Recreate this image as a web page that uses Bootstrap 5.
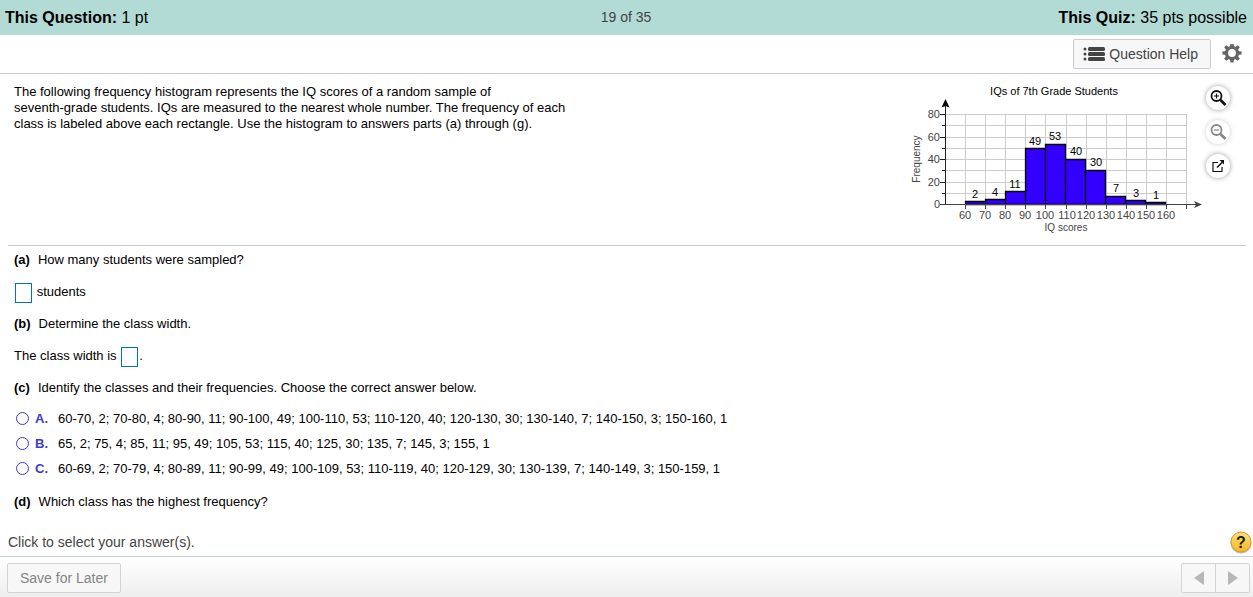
<!DOCTYPE html>
<html lang="en">
<head>
<meta charset="utf-8">
<meta name="viewport" content="width=device-width, initial-scale=1">
<title>Quiz</title>
<link rel="stylesheet" href="https://cdn.jsdelivr.net/npm/bootstrap@5.3.0/dist/css/bootstrap.min.css">
<style>
body { font-family: "Liberation Sans", Arial, sans-serif; font-size: 13px; line-height: 16px; color: #000; }
.quiz-head { background: #b2dbd5; font-size: 16px; line-height: 35px; padding: 0 6px 0 5px; }
.quiz-head .progress-note { font-size: 14px; color: #444; }
.tools { height: 39px; border-bottom: 1px solid #c8cad6; padding: 0 11px 0 8px; gap: 11px; }
.btn-quiz { --bs-btn-font-size: 14px; --bs-btn-line-height: 20px; --bs-btn-padding-x: 12px; --bs-btn-padding-y: 4px;
  --bs-btn-border-radius: 2px; --bs-btn-bg: #f7f7f7; --bs-btn-border-color: #ccc; --bs-btn-color: #444;
  --bs-btn-disabled-bg: #f7f7f7; --bs-btn-disabled-border-color: #d4d4d4; --bs-btn-disabled-color: #858585; --bs-btn-disabled-opacity: 1; }
.btn-help { padding-left: 9px; }
.plain { border: 0; background: none; padding: 0; line-height: 0; }
.prompt { min-height: 172px; margin: 0 7px 0 8px; padding: 10px 0 0 6px; border-bottom: 1px solid #c8cad6; }
.prompt p { max-width: 560px; }
.figure-block { margin: -9px 16px 0 0; }
.figure-block svg { display: block; }
.zoomers { gap: 10px; padding-top: 11px; }
.round-btn { width: 24px; height: 24px; border: 0; padding: 0; border-radius: 50%; background: #fff; box-shadow: 0 0 5px #999; line-height: 0; }
.round-btn:disabled { box-shadow: 0 0 5px #ccc; }
.parts { padding: 6px 14px; }
.parts p { margin: 0 0 16px; }
.part-label { margin-right: 8px; }
.answer-box { width: 17px; height: 20px; border: 1px solid #0078a0; padding: 0; margin: -3px 1px; vertical-align: middle; }
.choices { margin: -6px 0 13px 2px; }
.choice { height: 25px; }
.choice input { appearance: none; width: 13px; height: 13px; margin: 0 6px 0 0; border: 1px solid #3c3ccc; border-radius: 50%; background: #fff; }
.choice input:checked { background: #3c3ccc; box-shadow: inset 0 0 0 3px #fff; }
.choice b { color: #3c3ccc; width: 23px; }
.hint { font-size: 14px; color: #444; padding: 0 1px 2px 8px; }
.quiz-foot { border-top: 1px solid #c8cfe0; background: linear-gradient(#fff, #eee); padding: 6px 3px 4px 7px; }
.btn-step { width: 35px; height: 30px; padding: 0; line-height: 0; }
</style>
</head>
<body class="d-flex flex-column min-vh-100">
<header class="quiz-head row g-0">
  <div class="col"><b>This Question:</b> 1 pt</div>
  <div class="col text-center progress-note">19 of 35</div>
  <div class="col text-end"><b>This Quiz:</b> 35 pts possible</div>
</header>
<div class="tools d-flex align-items-center justify-content-end">
  <button type="button" class="btn btn-quiz btn-help d-flex align-items-center">
    <svg class="me-1" width="22" height="16" viewBox="0 0 22 16" fill="#444" aria-hidden="true"><circle cx="2" cy="3" r="1.5"/><circle cx="2" cy="8" r="1.5"/><circle cx="2" cy="13" r="1.5"/><rect x="5" y="1" width="17" height="4" rx="1.5"/><rect x="5" y="6" width="17" height="4" rx="1.5"/><rect x="5" y="11" width="17" height="4" rx="1.5"/></svg>Question Help
  </button>
  <button type="button" class="plain" aria-label="Settings">
    <svg width="20" height="20" viewBox="-10 -9 20 20"><g fill="#666"><g id="tooth"><path d="M-2.1-6-1.5-9.6h3L2.1-6ZM-2.1 6-1.5 9.6h3L2.1 6Z"/></g><use href="#tooth" transform="rotate(45)"/><use href="#tooth" transform="rotate(90)"/><use href="#tooth" transform="rotate(135)"/></g><circle r="5.5" fill="none" stroke="#666" stroke-width="3.2"/></svg>
  </button>
</div>
<main class="flex-grow-1">
  <section class="prompt d-flex justify-content-between">
    <p class="mb-0">The following frequency histogram represents the IQ scores of a random sample of<br>seventh-grade students. IQs are measured to the nearest whole number. The frequency of each<br>class is labeled above each rectangle. Use the histogram to answers parts (a) through (g).</p>
    <div class="figure-block d-flex">
      <svg width="305" height="165" viewBox="0 0 305 165" role="img" aria-label="IQs of 7th Grade Students" font-size="11" text-anchor="middle">
        <path fill="none" stroke="#ccc" d="M64.5 39v90M84.5 39v90M104.5 39v90M124.5 39v90M144.5 39v90M165.5 39v90M185.5 39v90M205.5 39v90M225.5 39v90M245.5 39v90M265.5 39v90M285.5 39v90M44 39.5h241M44 50.5h241M44 62.5h241M44 73.5h241M44 84.5h241M44 95.5h241M44 107.5h241M44 118.5h241"/>
        <g fill="#30f" stroke="#000" stroke-width="1.3">
          <path d="M64.5 126.5h20v3h-20ZM84.5 124.5h20v5h-20ZM104.5 116.5h20v13h-20ZM124.5 73.5h20v56h-20ZM144.5 69.5h20v60h-20ZM164.5 84.5h20v45h-20ZM184.5 95.5h20v34h-20ZM204.5 121.5h20v8h-20ZM224.5 125.5h20v4h-20ZM244.5 127.5h20v2h-20Z"/>
        </g>
        <path fill="none" stroke="#444" d="M39 129.5h257M64.5 129v5M84.5 129v5M104.5 129v5M124.5 129v5M144.5 129v5M165.5 129v5M185.5 129v5M205.5 129v5M225.5 129v5M245.5 129v5M265.5 129v5M285.5 129v5"/>
        <path fill="none" stroke="#222" d="M44.5 30v100M39 39.5h5M41 50.5h3M39 62.5h5M41 73.5h3M39 84.5h5M41 95.5h3M39 107.5h5M41 118.5h3"/>
        <path d="M44.500 24 48.500 32.500 44.500 31 40.500 32.500Z"/>
        <path fill="#444" d="M301 129.500 293 133 295 129.500 293 126Z"/>
        <text x="153" y="20">IQs of 7th Grade Students</text>
        <g><text x="74" y="123">2</text><text x="94" y="121">4</text><text x="114" y="113">11</text><text x="134" y="70">49</text><text x="154" y="65">53</text><text x="175" y="80">40</text><text x="195" y="91">30</text><text x="215" y="117">7</text><text x="235" y="122">3</text><text x="255" y="124">1</text></g>
        <g fill="#444"><text x="64" y="144">60</text><text x="84" y="144">70</text><text x="104" y="144">80</text><text x="124" y="144">90</text><text x="144" y="144">100</text><text x="166" y="144">110</text><text x="185" y="144">120</text><text x="205" y="144">130</text><text x="225" y="144">140</text><text x="245" y="144">150</text><text x="265" y="144">160</text></g>
        <g fill="#444" text-anchor="end"><text x="39" y="43">80</text><text x="39" y="66">60</text><text x="39" y="88">40</text><text x="39" y="111">20</text><text x="39" y="133">0</text></g>
        <g fill="#444" font-size="10"><text x="165" y="156">IQ scores</text><text transform="translate(19 84) rotate(-90)">Frequency</text></g>
      </svg>
      <div class="zoomers d-flex flex-column">
        <button type="button" class="round-btn" aria-label="Zoom in"><svg width="24" height="24" viewBox="0 0 24 24" fill="none" stroke="#111"><circle cx="10.500" cy="10" r="5" stroke-width="1.800"/><path stroke-width="1.200" d="M8 10h5M10.500 7.500v5"/><path stroke-width="2.600" d="m14.500 14 5 5"/></svg></button>
        <button type="button" class="round-btn" aria-label="Zoom out" disabled><svg width="24" height="24" viewBox="0 0 24 24" fill="none" stroke="#888"><circle cx="10.500" cy="10" r="5" stroke-width="1.800"/><path stroke-width="1.200" d="M8 10h5"/><path stroke-width="2.600" d="m14.500 14 5 5"/></svg></button>
        <button type="button" class="round-btn" aria-label="Open in new window"><svg width="24" height="24" viewBox="0 0 24 24" fill="none" stroke="#111"><path stroke-width="1.200" d="M12 8.500H7v9h9V13"/><path stroke-width="1.600" d="m11 13.500 5-5"/><path fill="#111" stroke="none" d="M13.500 6H18v4.500Z"/></svg></button>
      </div>
    </div>
  </section>
  <section class="parts">
    <p><b class="part-label">(a)</b>How many students were sampled?</p>
    <p><input class="answer-box" type="text" id="sampled"> <label for="sampled">students</label></p>
    <p><b class="part-label">(b)</b>Determine the class width.</p>
    <p><label for="width">The class width is</label> <input class="answer-box" type="text" id="width">.</p>
    <p><b class="part-label">(c)</b>Identify the classes and their frequencies. Choose the correct answer below.</p>
    <div class="choices">
      <label class="choice d-flex align-items-center"><input type="radio" name="classes"><b>A.</b>60-70, 2; 70-80, 4; 80-90, 11; 90-100, 49; 100-110, 53; 110-120, 40; 120-130, 30; 130-140, 7; 140-150, 3; 150-160, 1</label>
      <label class="choice d-flex align-items-center"><input type="radio" name="classes"><b>B.</b>65, 2; 75, 4; 85, 11; 95, 49; 105, 53; 115, 40; 125, 30; 135, 7; 145, 3; 155, 1</label>
      <label class="choice d-flex align-items-center"><input type="radio" name="classes"><b>C.</b>60-69, 2; 70-79, 4; 80-89, 11; 90-99, 49; 100-109, 53; 110-119, 40; 120-129, 30; 130-139, 7; 140-149, 3; 150-159, 1</label>
    </div>
    <p class="mb-0"><b class="part-label">(d)</b>Which class has the highest frequency?</p>
  </section>
</main>
<div class="hint d-flex justify-content-between align-items-center">
  <span>Click to select your answer(s).</span>
  <button type="button" class="plain" aria-label="Help">
    <svg width="22" height="24" viewBox="0 0 22 24"><defs><linearGradient id="gold" x2="0" y2="1"><stop stop-color="#ffe27a"/><stop offset="1" stop-color="#f9b61c"/></linearGradient></defs><circle cx="11" cy="13" r="10.500" fill="#bbb"/><circle cx="11" cy="12" r="10" fill="url(#gold)" stroke="#d39c2c"/><text x="11" y="18" text-anchor="middle" font-size="16" font-weight="bold" fill="#222">?</text></svg>
  </button>
</div>
<footer class="quiz-foot d-flex justify-content-between">
  <button type="button" class="btn btn-quiz" disabled>Save for Later</button>
  <div class="btn-group">
    <button type="button" class="btn btn-quiz btn-step" aria-label="Previous" disabled><svg width="10" height="14" viewBox="0 0 10 14"><path fill="#b5b7ba" d="M10 0v14L0 7Z"/></svg></button>
    <button type="button" class="btn btn-quiz btn-step" aria-label="Next" disabled><svg width="10" height="14" viewBox="0 0 10 14"><path fill="#b5b7ba" d="M0 0v14l10-7Z"/></svg></button>
  </div>
</footer>
<script src="https://cdn.jsdelivr.net/npm/bootstrap@5.3.0/dist/js/bootstrap.bundle.min.js"></script>
</body>
</html>
